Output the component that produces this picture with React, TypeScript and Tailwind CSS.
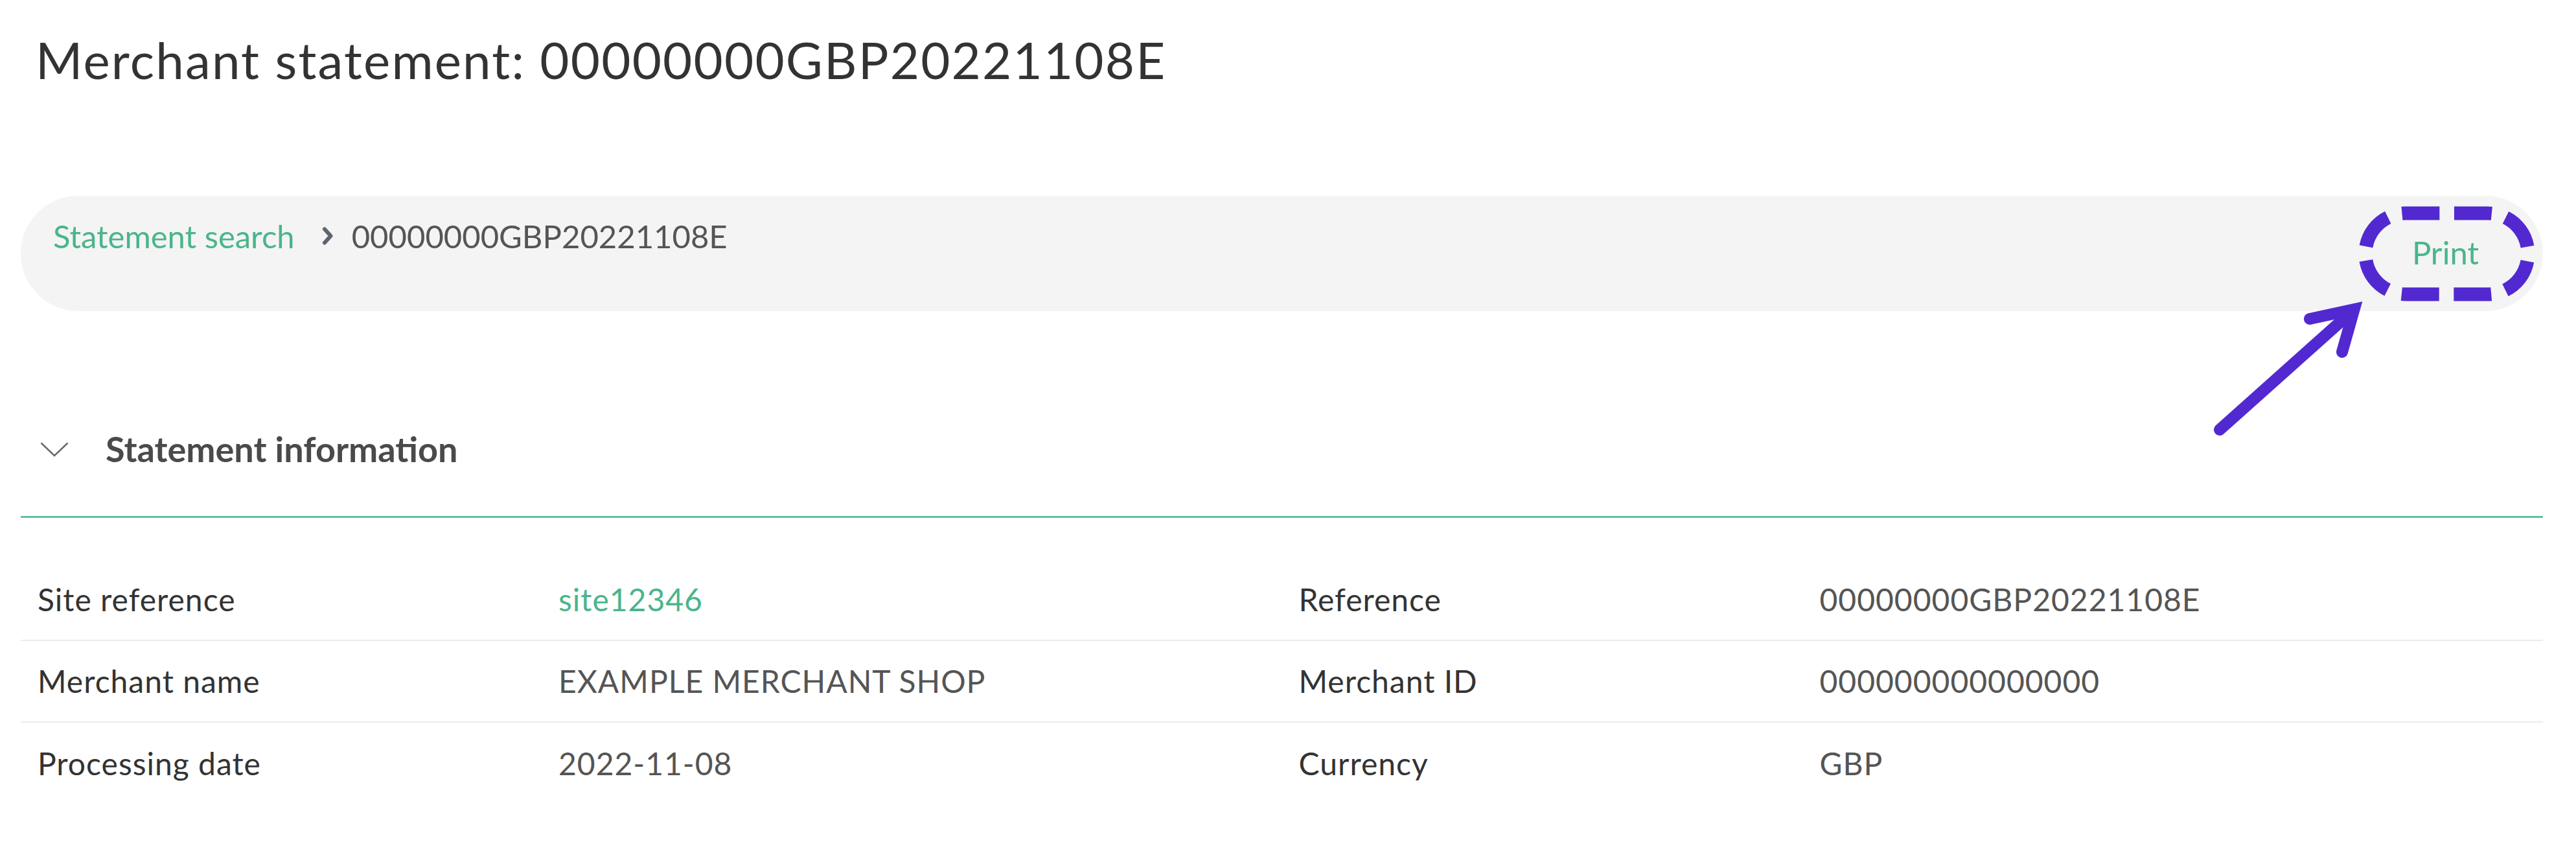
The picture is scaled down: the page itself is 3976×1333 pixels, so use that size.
import React from "react";

interface Row {
  label: string;
  value: string;
  link?: boolean;
  label2: string;
  value2: string;
}

const rows: Row[] = [
  { label: "Site reference", value: "site12346", link: true, label2: "Reference", value2: "00000000GBP20221108E" },
  { label: "Merchant name", value: "EXAMPLE MERCHANT SHOP", label2: "Merchant ID", value2: "000000000000000" },
  { label: "Processing date", value: "2022-11-08", label2: "Currency", value2: "GBP" },
];

function Annotation() {
  // dashed pill + arrow drawn over the Print button
  return (
    <svg
      className="absolute left-[3400px] top-[280px] pointer-events-none"
      width="576"
      height="420"
      viewBox="0 0 576 420"
      fill="none"
    >
      <path
        d="M251 111.5 A62.5 62.5 0 0 1 313.5 49 L439.5 49 A62.5 62.5 0 0 1 502 111.5 A62.5 62.5 0 0 1 439.5 174 L313.5 174 A62.5 62.5 0 0 1 251 111.5 Z"
        stroke="#5229d1"
        strokeWidth="21"
        strokeDasharray="58 22.59"
        strokeDashoffset="69.3"
      />
      <path d="M26 383 L222 208" stroke="#5229d1" strokeWidth="18" strokeLinecap="round" />
      <path
        d="M165 212 L233.6 197.3 L215 263"
        stroke="#5229d1"
        strokeWidth="18"
        strokeLinecap="round"
        strokeLinejoin="miter"
      />
    </svg>
  );
}

export default function App() {
  return (
    <div className="relative w-[3976px] h-[1333px] bg-white pl-[32px] pr-[51px] font-['Lato',sans-serif]">
      <h1 className="pl-[23px] pt-[53px] text-[78px] leading-[78px] tracking-[2.2px] font-normal text-[#333333]">
        Merchant statement: 00000000GBP20221108E
      </h1>

      <div className="mt-[171px] h-[178px] rounded-full bg-[#f4f4f4] flex justify-between pl-[50px] pr-[99px]">
        <div className="flex items-start pt-[38px] text-[49px] leading-[49px]">
          <span className="text-[#4ab58b]">Statement search</span>
          <svg className="ml-[40px] mr-[26px] mt-[9px]" width="22" height="30" viewBox="0 0 22 30" fill="none">
            <path d="M6 4.5 L15.5 15 L6 25.5" stroke="#5d6570" strokeWidth="6" strokeLinecap="round" strokeLinejoin="round" />
          </svg>
          <span className="text-[#555555]">00000000GBP20221108E</span>
        </div>
        <button className="self-center pb-[3px] text-[49px] leading-[49px] text-[#4ab58b]">Print</button>
      </div>

      <div className="mt-[186px] flex items-center pl-[30px]">
        <svg width="44" height="23" viewBox="0 0 44 23" fill="none">
          <path d="M1.5 1.5 L22 21 L42.5 1.5" stroke="#666b70" strokeWidth="2.5" />
        </svg>
        <span className="ml-[57px] text-[54px] leading-[54px] font-bold text-[#4a4a4a]">Statement information</span>
      </div>
      <div className="mt-[76px] border-b-[3px] border-[#5fc39c]" />

      <div className="mt-[64px]">
        {rows.map((r, i) => (
          <div
            key={r.label}
            className={`grid grid-cols-[804px_1fr_804px_1fr] h-[126px] items-center text-[48px] leading-[48px] tracking-[1px] ${
              i < rows.length - 1 ? "border-b-2 border-[#ececec]" : ""
            }`}
          >
            <div className="pl-[26px] text-[#333333]">{r.label}</div>
            <div className={`pl-[26px] ${r.link ? "text-[#4ab58b]" : "text-[#555555]"}`}>{r.value}</div>
            <div className="pl-[26px] text-[#333333]">{r.label2}</div>
            <div className="pl-[26px] text-[#555555]">{r.value2}</div>
          </div>
        ))}
      </div>

      <Annotation />
    </div>
  );
}
